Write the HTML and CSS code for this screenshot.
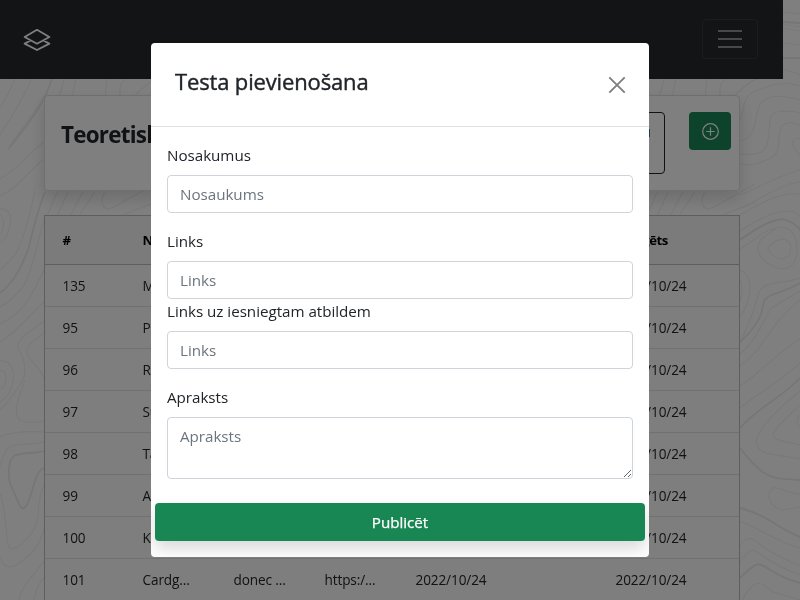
FILE: index.html
```html
<!DOCTYPE html>
<html lang="lv">
<head>
<meta charset="utf-8">
<title>Testi</title>
<link rel="stylesheet" href="styles.css">
</head>
<body>
<svg class="topo" width="800" height="600" viewBox="0 0 800 600" fill="none">
  <defs>
    <g id="strip">
      <path d="M15 78Q8 96 0 108M32 78C24 96 12 117 0 135M65 78C60 92 58 104 51 118M76 78L72 98M107 78L105 98M120 98V88Q121 80 130 77M132 98Q142 88 153 80"/>
      <path d="M58 190L47 216M69 190L57 216M84 190L70 216M96 190L79 216M106 190C98 202 103 213 114 207L155 184M120 216L156 202"/>
    </g>
  </defs>
  <use href="#strip"/>
  <use href="#strip" x="600"/>
  <path d="M44 96C34 116 16 133 8 150M44 142C32 150 24 164 0 179M44 159C30 170 18 188 0 196"/>
  <path class="bold" d="M52 78C45 104 28 124 10 147M45 192C36 214 33 232 28 250C20 270 14 282 0 293"/>
  <path d="M35 190C30 215 24 236 18 250Q10 262 0 270M0 209C9 208 12 216 10 224C9 234 5 240 0 243M0 215C4 216 5 230 0 234M44 221C36 245 32 275 22 288Q12 300 0 307M44 270C34 290 26 312 0 324M44 302C32 312 20 330 0 342M44 321C30 332 12 340 20 352C27 364 25 376 22 382Q10 400 0 410M44 333C34 340 22 348 29 358C37 366 44 374 44 380M0 361C12 360 15 372 13 382Q10 396 0 402M0 370C8 371 8 384 0 390"/>
  <path d="M25 380C19 397 12 413 20 420Q28 424 44 421M0 437Q15 430 44 432M44 442C28 446 12 441 6 451Q1 460 0 466M0 494C6 508 5 528 8 544Q10 552 17 547C28 540 36 530 38 516Q39 494 44 486M0 557Q5 570 14 566C29 558 40 546 44 529M19 600C23 582 36 574 44 561M34 600Q37 584 44 578"/>
  <path class="bold" d="M44 451C32 454 20 452 14 456C8 460 7 479 12 488L20 506Q23 511 26 506C32 496 33 484 37 476Q39 470 44 468"/>
  <path d="M783 12L800 14M783 24L800 27M783 28L800 31M783 43L800 45M783 70Q793 71 800 75M740 92Q745 84 757 79M740 120C745 108 742 97 755 91C770 86 780 80 800 86M740 141C757 138 754 119 759 107C764 95 778 94 800 100M740 154C763 156 767 150 768 140C771 124 767 112 777 112Q790 110 800 113M740 164C757 166 760 162 768 159C783 155 776 140 781 128C785 121 792 122 800 125M800 138C792 138 791 143 795 149L800 156"/>
  <path d="M740 195C760 187 782 174 800 170M740 208C760 200 780 184 800 182M740 215C758 205 780 191 800 194M740 231C755 221 774 211 787 211Q795 211 800 216M740 239C757 228 773 218 787 220Q799 225 800 232M740 249C757 239 762 230 777 228C794 224 798 242 797 253C795 269 784 272 773 266C758 260 753 245 764 237L777 228M768 248C773 240 785 236 790 243Q793 257 782 259Q772 258 768 248M740 270C752 274 752 292 746 306Q743 313 740 317M740 280Q744 290 740 302M800 278C784 284 766 280 759 292C752 318 746 330 740 342"/>
  <path class="bold" d="M783 22L800 23M783 58H800M740 240C760 226 771 220 783 219Q793 222 800 229M800 283C781 295 765 292 763 305C762 318 751 332 740 342"/>
  <path d="M740 354C756 341 763 321 771 308Q781 302 800 291M740 366C763 351 768 325 800 300M740 386C766 369 777 352 800 339M740 408C765 388 780 382 800 363M800 391C779 408 760 426 756 441C757 457 779 454 800 459M800 405C787 417 776 427 773 434C774 443 790 441 800 445M800 415Q794 422 800 427"/>
  <path class="bold" d="M740 428C760 406 781 398 800 378M740 448C766 482 774 478 800 480M740 508C765 514 778 528 800 537M740 578C756 562 758 561 770 570Q785 579 800 583"/>
  <path d="M800 494C786 494 781 486 773 488C765 494 770 508 783 510L800 507M740 521C762 530 776 541 800 548M740 546Q747 533 758 543C772 554 783 558 800 566M740 562C751 546 754 549 763 556Q780 568 800 575M742 600C756 576 760 582 773 592Q786 596 800 600"/>
</svg>

<div class="page">
  <nav class="navbar">
    <a class="brand" href="#"><svg width="28" height="24" viewBox="0 0 28 24"><path d="M14 1.8 26.4 9 14 15.7 1.6 9ZM7.6 12.5 1.6 15.6 14 22 26.4 15.6 20.4 12.5"/></svg></a>
    <button class="toggler"><span></span><span></span><span></span></button>
  </nav>
  <main class="container">
    <section class="card">
      <h2>Teoretiski</h2>
      <div class="actions">
        <div class="search"><span></span></div>
        <button class="add"><svg width="17" height="17" viewBox="0 0 17 17"><circle cx="8.5" cy="8.5" r="7.8"/><path d="M8.5 4.3v8.4M4.3 8.5h8.4"/></svg></button>
      </div>
    </section>
    <section class="table">
      <div class="row head"><span>#</span><span>Nos.</span><span></span><span></span><span></span><span>Rediģēts</span></div>
      <div class="row"><span>135</span><span>Ma...</span><span></span><span></span><span></span><span>2022/10/24</span></div>
      <div class="row"><span>95</span><span>Pr...</span><span></span><span></span><span></span><span>2022/10/24</span></div>
      <div class="row"><span>96</span><span>Ra...</span><span></span><span></span><span></span><span>2022/10/24</span></div>
      <div class="row"><span>97</span><span>Su...</span><span></span><span></span><span></span><span>2022/10/24</span></div>
      <div class="row"><span>98</span><span>Ta...</span><span></span><span></span><span></span><span>2022/10/24</span></div>
      <div class="row"><span>99</span><span>Al...</span><span></span><span></span><span></span><span>2022/10/24</span></div>
      <div class="row"><span>100</span><span>Ko...</span><span></span><span></span><span></span><span>2022/10/24</span></div>
      <div class="row"><span>101</span><span>Cardg...</span><span>donec ...</span><span>https:/...</span><span>2022/10/24</span><span>2022/10/24</span></div>
    </section>
  </main>
</div>

<div class="backdrop">
  <form class="modal">
    <header>
      <h5>Testa pievienošana</h5>
      <button type="button" class="close"><svg width="18" height="18" viewBox="0 0 18 18"><path d="M1.3 1.3 16.7 16.7M16.7 1.3 1.3 16.7"/></svg></button>
    </header>
    <div class="fields">
      <label for="name">Nosakumus</label>
      <input id="name" placeholder="Nosaukums">
      <label for="link" class="spaced">Links</label>
      <input id="link" placeholder="Links">
      <label for="answers">Links uz iesniegtam atbildem</label>
      <input id="answers" placeholder="Links">
      <label for="desc" class="spaced">Apraksts</label>
      <textarea id="desc" placeholder="Apraksts"></textarea>
    </div>
    <button type="button" class="submit">Publicēt</button>
  </form>
</div>
</body>
</html>
```
FILE: styles.css
```css
* { box-sizing: border-box; }
html, body { height: 100%; overflow: hidden; }
body {
  margin: 0;
  background: #fff;
  color: #212529;
  font: 15.2px/24px "Open Sans", "Noto Sans", sans-serif;
}
button, input, textarea { font: inherit; letter-spacing: inherit; }
.topo { position: fixed; inset: 0; stroke: #f2f2f2; stroke-width: 1.2; }
.topo .bold { stroke: #ececec; stroke-width: 1.8; }

.page { position: relative; width: 783px; }
.navbar {
  display: flex;
  justify-content: space-between;
  align-items: flex-start;
  height: 79px;
  padding: 19px 25px 0 23px;
  background: #24282c;
}
.brand { display: flex; margin-top: 9px; }
.brand svg { fill: none; stroke: #fff; stroke-width: 1.8; stroke-linejoin: round; }
.toggler {
  display: flex;
  flex-direction: column;
  justify-content: center;
  align-items: center;
  gap: 6px;
  width: 56px;
  height: 40px;
  padding: 0;
  background: none;
  border: 1px solid #34383c;
  border-radius: 4px;
}
.toggler span { width: 24px; height: 2px; background: #909294; }

.container { width: 696px; margin: 16px 0 0 44px; }
.card {
  display: flex;
  justify-content: space-between;
  height: 96px;
  padding: 16px 8px 16px 16px;
  background: #fff;
  border: 1px solid #dfdfdf;
  border-radius: 4px;
  box-shadow: 0 8px 16px rgba(0, 0, 0, .15);
}
.card h2 { margin: 9px 0 0; font-size: 22.4px; line-height: 28px; font-weight: 700; letter-spacing: -.75px; white-space: nowrap; }
.actions { display: flex; align-items: flex-start; gap: 24px; }
.search { display: flex; justify-content: flex-end; width: 220px; height: 62px; padding: 16px 14px; border: 1px solid #212529; border-radius: 4px; }
.search span { width: 1px; height: 8px; background: #3f7f9f; }
.add { display: grid; place-items: center; width: 42px; height: 38px; padding: 0; border: 0; border-radius: 4px; background: #198754; }
.add svg { fill: none; stroke: #fff; stroke-width: 1.2; }

.table { margin-top: 24px; border: 1px solid #b8bcc0; background: #fcfcfc; font-size: 13.6px; letter-spacing: -.12px; }
.row {
  display: grid;
  grid-template-columns: 80px 91px 91px 91px 200px 1fr;
  align-items: center;
  height: 42px;
  padding-left: 17.5px;
  border-bottom: 1px solid #dee2e6;
}
.head { height: 49px; background: #f7f7f7; border-color: #b8bcc0; color: #000; font-size: 13.2px; font-weight: 700; letter-spacing: -.5px; }

.backdrop { position: fixed; inset: 0; display: grid; place-items: center; background: rgba(0, 0, 0, .5); }
.modal {
  width: 498px;
  height: 514px;
  background: #fff;
  border-radius: 4px;
  overflow: hidden;
  letter-spacing: -.03px;
}
.modal header {
  display: flex;
  justify-content: space-between;
  align-items: center;
  height: 84px;
  padding: 0 23px 0 24px;
  border-bottom: 1px solid #dee2e6;
}
.modal h5 { margin: 0; padding-bottom: 8px; font-size: 22px; font-weight: 500; letter-spacing: -.15px; -webkit-text-stroke: .4px #212529; }
.close { display: flex; padding: 0; border: 0; background: none; }
.close svg { fill: none; stroke: #7f7f7f; stroke-width: 1.9; }
.fields { display: flex; flex-direction: column; padding: 16px 16px 0; }
.fields label { margin-bottom: 8px; line-height: 24px; }
.fields .spaced { margin-top: 16px; }
.fields input, .fields textarea {
  display: block;
  width: 100%;
  height: 38px;
  padding: 6px 12px;
  border: 1px solid #ced4da;
  border-radius: 4px;
  background: #fff;
  outline: 0;
}
.fields textarea { height: 62px; }
.fields ::placeholder { color: #6c757d; }
.submit {
  display: block;
  width: 490px;
  height: 38px;
  margin: 24px 4px 0;
  padding: 0;
  border: 0;
  border-radius: 4px;
  background: #198754;
  color: #fff;
  -webkit-text-stroke: .25px #fff;
  box-shadow: 0 8px 16px rgba(0, 0, 0, .15);
}
```
